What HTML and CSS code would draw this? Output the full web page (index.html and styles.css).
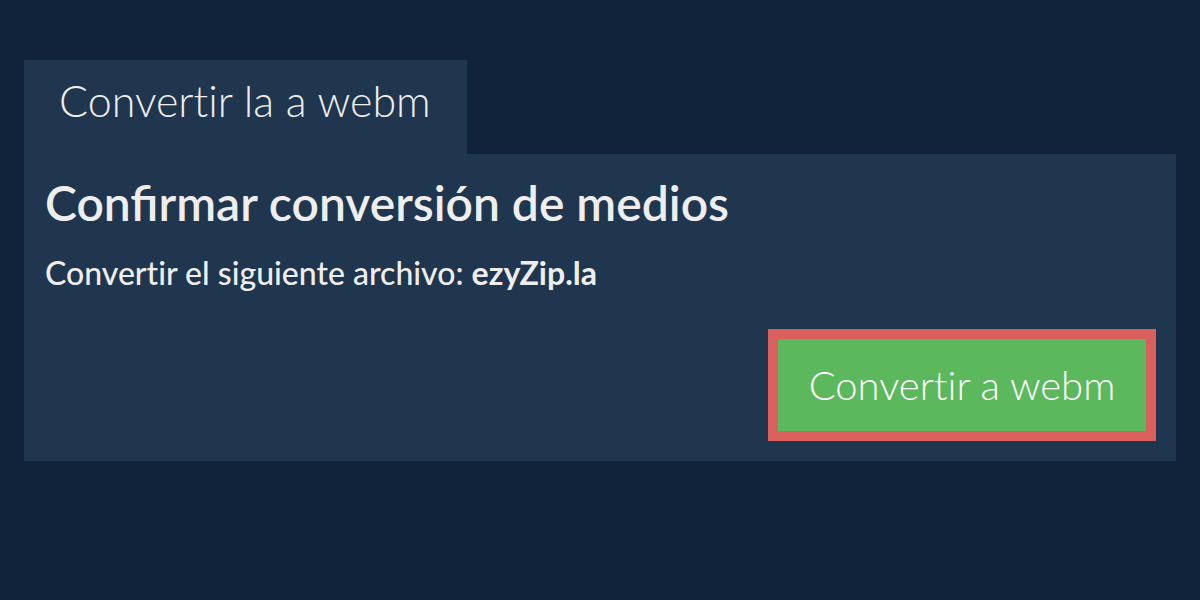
FILE: index.html
```html
<!DOCTYPE html>
<html lang="es">
<head>
<meta charset="utf-8">
<link rel="stylesheet" href="styles.css">
</head>
<body>
<div class="page">
  <div class="tab">Convertir la a webm</div>
  <div class="panel">
    <h1 class="title">Confirmar conversión de medios</h1>
    <p class="sub">Convertir el siguiente archivo: <b>ezyZip.la</b></p>
    <div class="actions">
      <button class="btn">Convertir a webm</button>
    </div>
  </div>
</div>
</body>
</html>
```
FILE: styles.css
```css
html, body { margin: 0; padding: 0; }
body {
  background: #10233a;
  width: 1200px;
  height: 600px;
  overflow: hidden;
  font-family: Lato, "Liberation Sans", sans-serif;
  color: #eeeeee;
}
.page {
  padding: 60px 24px 0 24px;
}
.tab {
  display: inline-block;
  background: #20354e;
  height: 94px;
  box-sizing: border-box;
  width: 443px;
  padding: 13px 0 0 35px;
  font-weight: 300;
  font-size: 43px;
  line-height: 56px;
  font-variant-ligatures: none;
  vertical-align: top;
}
.panel {
  background: #20354e;
  height: 307px;
  box-sizing: border-box;
  padding: 19px 20px 0 21px;
  display: flex;
  flex-direction: column;
}
.title {
  margin: 0;
  font-size: 48px;
  font-weight: 600;
  line-height: 60px;
}
.sub {
  margin: 20px 0 0 0;
  font-size: 32px;
  font-weight: 500;
  line-height: 40px;
  font-variant-ligatures: none;
}
.sub b { font-weight: 700; }
.actions {
  display: flex;
  justify-content: flex-end;
  margin-top: 36px;
}
.btn {
  background: #5cb85c;
  border: 10px solid #d9605c;
  width: 388px;
  height: 112px;
  color: #ffffff;
  font-family: Lato, "Liberation Sans", sans-serif;
  font-weight: 300;
  font-size: 40px;
  font-variant-ligatures: none;
  padding: 0;
  cursor: pointer;
}
```
